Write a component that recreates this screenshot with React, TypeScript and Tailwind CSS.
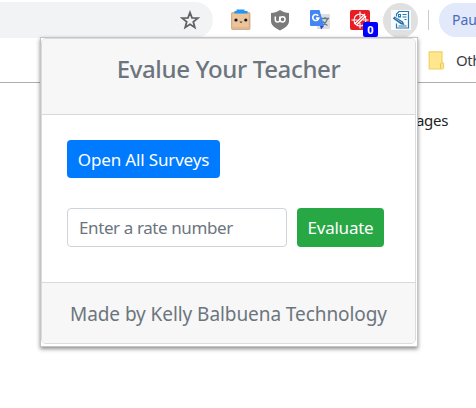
import React from "react";

function StarIcon() {
  return (
    <svg width="20" height="20" viewBox="0 0 20 20" fill="none" stroke="#5f6368" strokeWidth="1.800">
      <path d="M10 2.500 12 7.800l5.800.3-4.500 3.700 1.500 5.700L10 14.300l-4.800 3.200 1.500-5.700L2.200 8.100 8 7.800Z" />
    </svg>
  );
}

function BoxFaceIcon() {
  return (
    <svg width="20" height="22" viewBox="0 0 20 22">
      <rect x=".5" y="3.500" width="18.500" height="17" rx="1" fill="#e3b78d" stroke="#c79b72" strokeWidth=".7" />
      <rect x="1.500" y="5" width="16" height="13" fill="#ecc49c" />
      <path d="M3.500 4.500V2h2V.500h8V2h3v2.500Z" fill="#2196f3" />
      <circle cx="5" cy="11" r="1.600" fill="#111" />
      <circle cx="14.800" cy="11" r="1.600" fill="#111" />
      <path d="M8.800 12.800q1.200 1 2.400 0" stroke="#422" fill="none" />
    </svg>
  );
}

function ShieldIcon() {
  return (
    <svg width="20" height="22" viewBox="0 0 20 22">
      <path d="M10 1C7 3 4 4 1 4v8c0 4.500 4 7 9 9.500 5-2.500 9-5 9-9.500V4c-3 0-6-1-9-3Z" fill="#7b7b7b" />
      <path d="M5.300 7.500v3.200c0 1.700 1 2.300 2.300 2.300s2.200-.6 2.200-2.300V7.500" fill="none" stroke="#fff" strokeWidth="1.500" />
      <circle cx="12.500" cy="10.300" r="2.600" fill="none" stroke="#fff" strokeWidth="1.500" />
    </svg>
  );
}

function TranslateIcon() {
  return (
    <svg width="22" height="22" viewBox="0 0 22 22">
      <rect x="8" y="5" width="13" height="15" rx="1" fill="#dedede" />
      <path d="M12 9.500h8M16 8v2m2.500 0c-1 3-3 5-5 6.500m0-4.500c1.500 2 3 3.500 5 4.500" stroke="#607d8b" strokeWidth="1.300" fill="none" />
      <path d="m11 17 4 0-3 3.500Z" fill="#3444c5" />
      <path d="M2 1h8.500L15 17H2a1 1 0 0 1-1-1V2a1 1 0 0 1 1-1Z" fill="#4285f4" />
      <path d="M9.200 6.700a3 3 0 1 0 .5 2.500H7" stroke="#fff" strokeWidth="1.700" fill="none" />
    </svg>
  );
}

function TargetIcon() {
  return (
    <svg width="20" height="20" viewBox="0 0 20 20">
      <rect width="20" height="20" rx="2" fill="#e71d23" />
      <g fill="none" stroke="#fff" strokeWidth="1.100">
        <circle cx="10" cy="10" r="6" />
        <path d="M10 1.500v6M10 13v5.500M1.500 10h6M13 10h5.500" />
        <path d="M4.500 14 15 4M7 14.500 16 6" strokeWidth="1.300" />
      </g>
    </svg>
  );
}

function SurveyIcon() {
  return (
    <svg width="20" height="20" viewBox="0 0 20 20">
      <rect width="20" height="20" fill="#f9fcfe" />
      <g fill="none" stroke="#2a78b0" strokeWidth="1.200">
        <path d="M5.500 6.500V4l2.500-2.500h9.500V18h-12v-4.500" />
        <path d="M11.500 4.500h4M11.500 7h4M13.500 9.500h2M7.500 16h8" strokeWidth="1" />
        <rect x="7.500" y="4.500" width="2" height="2.500" strokeWidth="1" />
      </g>
      <path d="m1.800 8.500 1.700-2 8.500 5 1.500 3.500-3.800-.8Z" fill="#246fa6" />
      <path d="m4 8 7 4.700" stroke="#b7d4e8" strokeWidth=".7" />
    </svg>
  );
}

function FolderIcon() {
  return (
    <svg width="17" height="19" viewBox="0 0 17 19">
      <path d="M1.200.8h12.800v11l1.500.7v4.500l-1 1H1.200Z" fill="#ffe68f" stroke="#f3d063" strokeWidth="1.200" />
      <path d="M12.500 17.500v-4.500l1.500-1.500" stroke="#eac551" fill="none" />
    </svg>
  );
}

function Popup() {
  return (
    <section className="absolute left-[40px] top-[37px] h-[310px] w-[378px] border border-[#c4c4c4] bg-white shadow-[0_2px_4px_rgba(0,0,0,0.45)]">
      <div className="flex h-[306px] w-[375px] flex-col overflow-hidden rounded-[5px] border border-[#dcdcdc] bg-white text-[#6c757d]">
        <header className="flex h-[76px] shrink-0 justify-center border-b border-[#d9d9d9] bg-[#f7f7f7] pt-[13px]">
          <h1 className="whitespace-nowrap text-[24px] font-medium leading-[34px] tracking-[-0.35px]">Evalue Your Teacher</h1>
        </header>
        <main className="flex h-[167px] shrink-0 flex-col items-start gap-[30px] px-[25px] pt-[25px]">
          <button className="h-[38px] w-[153px] whitespace-nowrap rounded-[4px] bg-[#007bff] text-[17px] leading-[39px] tracking-[-0.15px] text-white">Open All Surveys</button>
          <div className="flex gap-[10px]">
            <input className="h-[39px] w-[220px] rounded-[4px] border border-[#ced4da] px-[11px] text-[17px] tracking-[-0.4px] outline-none placeholder:text-[#6c757d]" placeholder="Enter a rate number" />
            <button className="h-[39px] w-[87px] whitespace-nowrap rounded-[4px] bg-[#28a745] text-[17px] leading-[39px] tracking-[-0.25px] text-white">Evaluate</button>
          </div>
        </main>
        <footer className="flex flex-1 items-center justify-center whitespace-nowrap border-t border-[#d9d9d9] bg-[#f7f7f7] pt-[2px] text-[19px] tracking-[-0.07px]">
          Made by Kelly Balbuena Technology
        </footer>
      </div>
    </section>
  );
}

export default function App() {
  return (
    <div className="relative h-[408px] w-[476px] overflow-hidden bg-white font-['Noto_Sans','Open_Sans',sans-serif]">
      <div className="flex h-[38px] items-center pt-[2px]">
        <div className="flex h-9 w-[213px] shrink-0 items-center justify-end rounded-r-full bg-[#f1f3f4] pr-[13px]">
          <StarIcon />
        </div>
        <div className="ml-[18px] flex shrink-0 items-center">
          <BoxFaceIcon />
          <div className="ml-[19px]"><ShieldIcon /></div>
          <div className="ml-[19px]"><TranslateIcon /></div>
          <div className="relative ml-[19px]">
            <TargetIcon />
            <span className="absolute left-[13px] top-[12px] h-[15px] w-[15px] rounded-[2px] bg-[#0000ff] text-center text-[11px] font-bold leading-[16px] text-white">0</span>
          </div>
          <div className="ml-[13px] flex h-[35px] w-[35px] items-center justify-center rounded-full bg-[#e0e0e0]"><SurveyIcon /></div>
        </div>
        <div className="ml-[10px] h-5 w-px shrink-0 bg-[#c9cbcd]" />
        <div className="ml-[10px] h-[34px] w-[37px] shrink-0 rounded-l-full bg-[#e1e9fa] pl-[13px] text-[14px] leading-[34px] text-[#4a69b8]">Pau</div>
      </div>
      <div className="flex h-[45px] items-center border-b border-[#aeaeae] pl-[428px]">
        <div className="shrink-0"><FolderIcon /></div>
        <span className="ml-[11px] text-[15px] tracking-[-0.5px] text-[#3c4043]">Oth</span>
      </div>
      <p className="pl-[416px] pt-[25px] text-[15px] leading-6 tracking-[-0.3px] text-[#222]">ages</p>
      <Popup />
    </div>
  );
}
